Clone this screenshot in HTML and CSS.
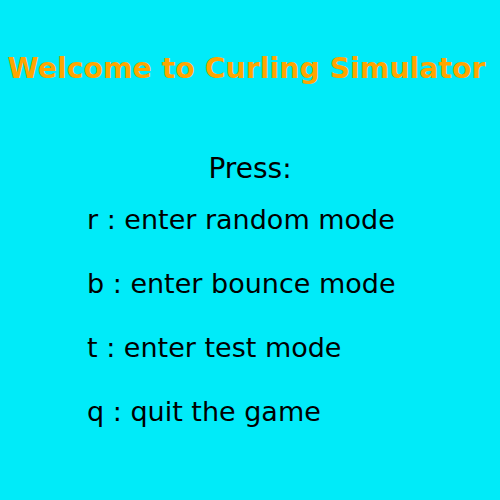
FILE: index.html
```html
<!DOCTYPE html>
<html>
<head>
<meta charset="utf-8">
<link rel="stylesheet" href="styles.css">
</head>
<body>
<main class="screen">
  <h1 class="title">Welcome to Curling Simulator</h1>
  <p class="press">Press:</p>
  <ul class="options">
    <li>r : enter random mode</li>
    <li>b : enter bounce mode</li>
    <li>t : enter test mode</li>
    <li>q : quit the game</li>
  </ul>
</main>
</body>
</html>
```

FILE: styles.css
```css
html, body {
  margin: 0;
  padding: 0;
}
body {
  background: #00ebf9;
  font-family: "DejaVu Sans", sans-serif;
}
.screen {
  width: 500px;
  height: 500px;
  display: flex;
  flex-direction: column;
}
.title {
  margin: 52px 0 0 0;
  padding-right: 7px;
  font-size: 28.4px;
  font-weight: bold;
  line-height: 1.164;
  color: #ffa500;
  text-align: center;
}
.press {
  margin: 68.3px 0 0 0;
  font-size: 28px;
  line-height: 1.164;
  color: #000;
  text-align: center;
}
.options {
  list-style: none;
  margin: 17.8px 0 0 0;
  padding: 0 0 0 87px;
  display: flex;
  flex-direction: column;
  gap: 32.6px;
  font-size: 27px;
  line-height: 1.164;
  color: #000;
}
.options li {
  margin: 0;
}
```
